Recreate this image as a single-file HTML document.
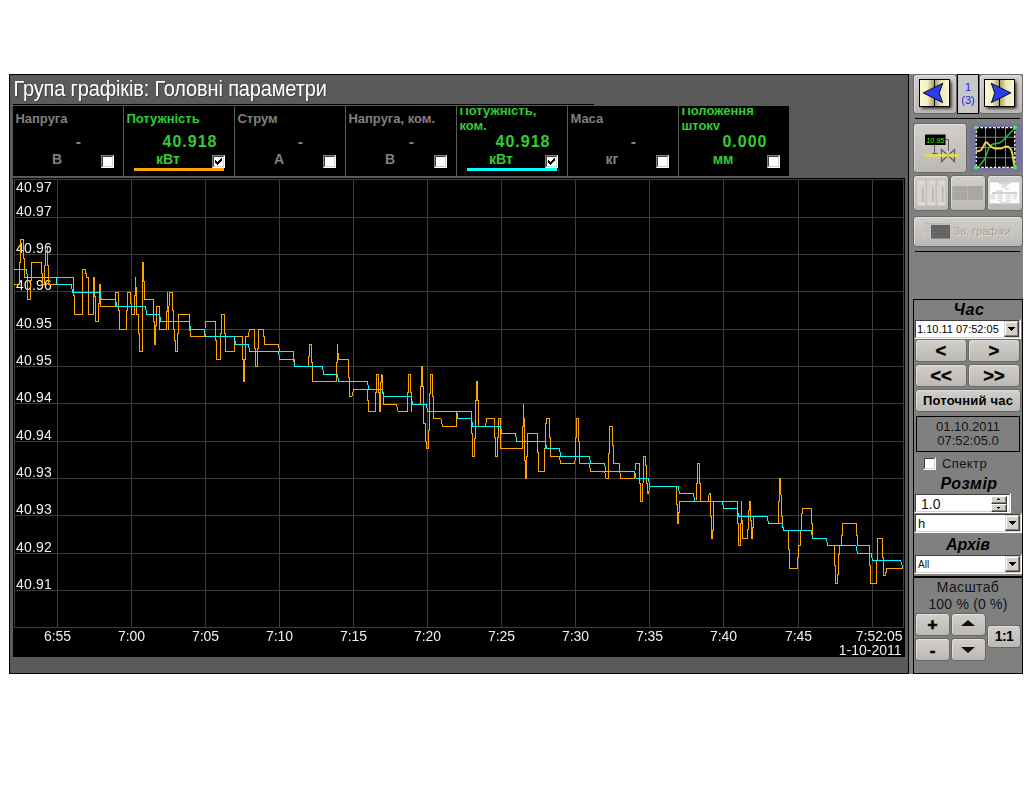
<!DOCTYPE html>
<html lang="uk">
<head>
<meta charset="utf-8">
<title>Група графіків: Головні параметри</title>
<style>
html,body{margin:0;padding:0;background:#fff;}
body{width:1034px;height:793px;position:relative;overflow:hidden;font-family:"Liberation Sans",sans-serif;}
.abs{position:absolute;}
#main{position:absolute;left:9px;top:74px;width:898px;height:598px;background:#5a5a5a;border:1px solid #000;}
#title{position:absolute;left:13.4px;top:77px;font-size:20px;letter-spacing:-0.15px;line-height:24px;color:#fff;text-shadow:1px 1px 0 rgba(0,0,0,0.3);white-space:nowrap;transform:scaleY(1.07);transform-origin:0 19px;}
#hline{position:absolute;left:13px;top:104px;width:581px;height:1px;background:#000;}
.cell{position:absolute;top:106px;width:110px;height:70px;background:#000;overflow:hidden;}
.cell .lbc{position:absolute;left:0;top:2px;width:110px;height:22px;overflow:hidden;}
.cell .lb{position:absolute;left:2.4px;font-size:13px;font-weight:bold;line-height:15px;white-space:nowrap;}
.cell .val{position:absolute;font-size:16px;letter-spacing:1px;font-weight:bold;line-height:18px;white-space:nowrap;}
.cell .un{position:absolute;font-size:14px;font-weight:bold;line-height:15px;white-space:nowrap;}
.gry{color:#808080;}
.grn{color:#32cd32;}
.cb{position:absolute;box-sizing:border-box;width:13px;height:13px;background:#fff;border:1px solid;border-color:#808080 #fff #fff #808080;}
.cb:before{content:"";position:absolute;left:0;top:0;width:9px;height:9px;border:1px solid;border-color:#404040 #d4d0c8 #d4d0c8 #404040;}
.cb svg{left:-1px !important;top:-1px !important;}
#chart{position:absolute;left:13px;top:178px;width:892px;height:479px;background:#000;}
#right{position:absolute;left:909px;top:74px;width:114px;height:600px;background:#808080;}
.btn{position:absolute;box-sizing:border-box;border:1px solid #666;border-radius:3.5px;background:linear-gradient(#d2cfcb,#bcb9b5);box-shadow:inset 1px 1px 0 rgba(255,255,255,0.4);color:#000;text-align:center;font-weight:bold;}
.sep{position:absolute;left:915px;width:106px;height:1px;background:#000;}

.hd{font-size:16px;font-weight:bold;font-style:italic;text-align:center;line-height:18px;color:#000;}
.sel{position:absolute;box-sizing:border-box;background:#fff;border:1px solid;border-color:#808080 #fff #fff #808080;color:#141418;}
.sel:before{content:"";position:absolute;left:0;top:0;right:0;bottom:0;border:1px solid;border-color:#404040 #d4d0c8 #d4d0c8 #404040;}
.dd{position:absolute;box-sizing:border-box;right:1px;top:1px;bottom:1px;width:15px;background:#d4d0c8;border:1px solid;border-color:#d4d0c8 #404040 #404040 #d4d0c8;box-shadow:inset -1px -1px 0 #808080, inset 1px 1px 0 #fff;}
.dd:after{content:"";position:absolute;left:3px;top:5px;width:7px;height:4px;background:linear-gradient(#000,#000) 0 0/7px 1px no-repeat,linear-gradient(#000,#000) 1px 1px/5px 1px no-repeat,linear-gradient(#000,#000) 2px 2px/3px 1px no-repeat,linear-gradient(#000,#000) 3px 3px/1px 1px no-repeat;}
.sp{position:absolute;box-sizing:border-box;right:3px;width:16px;height:8px;background:#d4d0c8;border:1px solid;border-color:#fff #404040 #404040 #fff;box-shadow:inset -1px -1px 0 #808080;}
.sp:after{content:"";position:absolute;left:5px;top:1px;width:3px;height:2px;background:linear-gradient(#000,#000) 1px 0/1px 1px no-repeat,linear-gradient(#000,#000) 0 1px/3px 1px no-repeat;}
.sp.d:after{top:2px;background:linear-gradient(#000,#000) 0 0/3px 1px no-repeat,linear-gradient(#000,#000) 1px 1px/1px 1px no-repeat;}
.tb{font-size:18.5px;line-height:22px;-webkit-text-stroke:0.35px #000;}
.zb{font-size:17px;line-height:20px;}
.up{position:absolute;left:9px;top:6px;border:7px solid transparent;border-bottom:6px solid #111;border-top:0;}
.dn{position:absolute;left:9px;top:8px;border:7px solid transparent;border-top:6px solid #111;border-bottom:0;}
</style>
</head>
<body>
<div id="main"></div>
<div id="title">Група графіків: Головні параметри</div>
<div id="hline"></div>
<div class="cell gry" style="left:13px"><div class="lbc"><div class="lb" style="top:3px">Напруга</div></div><div class="val" style="left:16px;width:100px;text-align:center;top:27px">-</div><div class="un" style="left:14px;width:60px;text-align:center;top:46px">В</div><div class="cb" style="left:88px;top:49px"></div></div>
<div class="cell grn" style="left:124px"><div class="lbc"><div class="lb" style="top:3px">Потужність</div></div><div class="val" style="left:16px;width:100px;text-align:center;top:27px">40.918</div><div class="un" style="left:14px;width:60px;text-align:center;top:46px">кВт</div><div class="abs" style="left:10px;top:62px;width:90px;height:3px;background:#ffa500"></div><div class="cb" style="left:88px;top:49px"><svg class="abs" style="left:0;top:0" width="13" height="13" shape-rendering="crispEdges"><path d="M3 5v3h1v1h1v1h1v-1h1v-1h1v-1h1v-1h1v-3h-1v1h-1v1h-1v1h-1v1h-1v-1h-1v-1z" fill="#000"/></svg></div></div>
<div class="cell gry" style="left:235px"><div class="lbc"><div class="lb" style="top:3px">Струм</div></div><div class="val" style="left:16px;width:100px;text-align:center;top:27px">-</div><div class="un" style="left:14px;width:60px;text-align:center;top:46px">А</div><div class="cb" style="left:88px;top:49px"></div></div>
<div class="cell gry" style="left:346px"><div class="lbc"><div class="lb" style="top:3px">Напруга, ком.</div></div><div class="val" style="left:16px;width:100px;text-align:center;top:27px">-</div><div class="un" style="left:14px;width:60px;text-align:center;top:46px">В</div><div class="cb" style="left:88px;top:49px"></div></div>
<div class="cell grn" style="left:457px"><div class="lbc"><div class="lb" style="top:-5px">Потужність,<br>ком.</div></div><div class="val" style="left:16px;width:100px;text-align:center;top:27px">40.918</div><div class="un" style="left:14px;width:60px;text-align:center;top:46px">кВт</div><div class="abs" style="left:10px;top:62px;width:90px;height:3px;background:#00ffff"></div><div class="cb" style="left:88px;top:49px"><svg class="abs" style="left:0;top:0" width="13" height="13" shape-rendering="crispEdges"><path d="M3 5v3h1v1h1v1h1v-1h1v-1h1v-1h1v-1h1v-3h-1v1h-1v1h-1v1h-1v1h-1v-1h-1v-1z" fill="#000"/></svg></div></div>
<div class="cell gry" style="left:568px"><div class="lbc"><div class="lb" style="top:3px">Маса</div></div><div class="val" style="left:16px;width:100px;text-align:center;top:27px">-</div><div class="un" style="left:14px;width:60px;text-align:center;top:46px">кг</div><div class="cb" style="left:88px;top:49px"></div></div>
<div class="cell grn" style="left:679px"><div class="lbc"><div class="lb" style="top:-5px">Положення<br>штоку</div></div><div class="val" style="left:16px;width:100px;text-align:center;top:27px">0.000</div><div class="un" style="left:14px;width:60px;text-align:center;top:46px">мм</div><div class="cb" style="left:88px;top:49px"></div></div>
<div id="chart">
<svg class="abs" style="left:0;top:0" width="892" height="479" viewBox="13 178 892 479" font-family="Liberation Sans, sans-serif" font-size="14" fill="#f0f0f0">
<path d="M14 217.5H904M14 254.5H904M14 291.5H904M14 329.5H904M14 366.5H904M14 403.5H904M14 441.5H904M14 478.5H904M14 515.5H904M14 553.5H904M14 590.5H904M57.5 179V628M131.5 179V628M205.5 179V628M279.5 179V628M353.5 179V628M427.5 179V628M501.5 179V628M575.5 179V628M649.5 179V628M723.5 179V628M798.5 179V628M872.5 179V628" stroke="#3d3d3d" stroke-width="1" fill="none" shape-rendering="crispEdges"/>
<rect x="14.5" y="179.5" width="889" height="448" stroke="#3d3d3d" stroke-width="1" fill="none" shape-rendering="crispEdges"/>
<g style="opacity:0.999">
<text x="16" y="192" letter-spacing="0.2">40.97</text>
<text x="16" y="216" letter-spacing="0.2">40.97</text>
<text x="16" y="253" letter-spacing="0.2">40.96</text>
<text x="16" y="290" letter-spacing="0.2">40.96</text>
<text x="16" y="328" letter-spacing="0.2">40.95</text>
<text x="16" y="365" letter-spacing="0.2">40.95</text>
<text x="16" y="402" letter-spacing="0.2">40.94</text>
<text x="16" y="440" letter-spacing="0.2">40.94</text>
<text x="16" y="477" letter-spacing="0.2">40.93</text>
<text x="16" y="514" letter-spacing="0.2">40.93</text>
<text x="16" y="552" letter-spacing="0.2">40.92</text>
<text x="16" y="589" letter-spacing="0.2">40.91</text>
<text x="57.5" y="641" text-anchor="middle">6:55</text>
<text x="131.5" y="641" text-anchor="middle">7:00</text>
<text x="205.5" y="641" text-anchor="middle">7:05</text>
<text x="279.5" y="641" text-anchor="middle">7:10</text>
<text x="353.5" y="641" text-anchor="middle">7:15</text>
<text x="427.5" y="641" text-anchor="middle">7:20</text>
<text x="501.5" y="641" text-anchor="middle">7:25</text>
<text x="575.5" y="641" text-anchor="middle">7:30</text>
<text x="649.5" y="641" text-anchor="middle">7:35</text>
<text x="723.5" y="641" text-anchor="middle">7:40</text>
<text x="798.5" y="641" text-anchor="middle">7:45</text>
<text x="902.5" y="641" text-anchor="end">7:52:05</text>
<text x="901.5" y="655" text-anchor="end">1-10-2011</text>
</g>
<polyline points="14.4,284.5 19.5,284.5 19.5,262.5 20.5,262.5 20.5,239.5 23.6,239.5 23.6,258.5 24.6,258.5 24.6,277.5 27.3,277.5 27.3,299.5 30.7,299.5 30.7,280.5 31.6,280.5 31.6,262.5 41.7,262.5 41.7,273.5 42.8,273.5 42.8,284.5 44.5,284.5 44.5,265.5 45.4,265.5 45.4,247.5 47.7,247.5 47.7,265.5 48.6,265.5 48.6,284.5 56.6,284.5 56.6,277.5 73.1,277.5 73.2,277.5 73.2,295.5 74.5,295.5 74.5,314.5 82.1,314.5 82.1,269.5 85.9,269.5 85.9,273.5 86.7,273.5 86.7,277.5 88.8,277.5 89.0,314.5 92.5,314.5 93.0,314.5 93.0,277.5 94.7,277.5 94.7,296.5 95.7,296.5 95.7,321.5 98.5,321.5 98.5,303.5 99.3,303.5 99.3,284.5 100.5,284.5 100.9,306.5 115.7,306.5 115.7,292.5 118.4,292.5 118.4,310.5 119.3,310.5 119.3,329.5 126.5,329.5 126.5,310.5 127.5,310.5 127.5,292.5 130.2,292.5 130.2,303.5 131.5,303.5 131.5,314.5 134.1,314.5 134.4,295.5 135.4,295.5 135.4,277.5 135.8,277.5 136.2,295.5 136.9,295.5 136.9,314.5 138.4,314.5 138.4,333.5 139.4,333.5 139.4,351.5 142.0,351.5 142.0,262.5 143.5,262.5 143.5,281.5 144.5,281.5 144.5,299.5 153.6,299.5 153.6,321.5 154.6,321.5 154.6,344.5 155.8,344.5 155.8,325.5 156.3,325.5 156.3,306.5 159.6,306.5 159.9,329.5 166.6,329.5 166.6,311.5 167.6,311.5 167.6,292.5 167.8,292.5 168.3,329.5 168.7,329.5 169.2,292.5 172.5,292.5 172.5,310.5 173.5,310.5 173.5,329.5 174.8,329.5 174.8,340.5 175.8,340.5 175.8,351.5 177.5,351.5 177.5,333.5 178.5,333.5 178.5,314.5 190.0,314.5 189.8,314.5 190.1,336.5 204.8,336.5 205.2,321.5 215.7,321.5 215.7,340.5 216.6,340.5 216.6,359.5 220.0,359.5 220.0,333.5 221.6,333.5 221.6,314.5 224.4,314.5 224.4,333.5 225.4,333.5 225.4,351.5 234.5,351.5 234.9,336.5 242.4,336.5 242.7,359.5 243.3,359.5 243.3,381.5 244.7,381.5 244.7,359.5 245.6,359.5 245.6,336.5 248.1,336.5 249.7,329.5 254.7,329.5 254.7,348.5 255.4,348.5 255.4,366.5 257.6,366.5 257.6,348.5 258.4,348.5 258.4,329.5 263.2,329.5 263.2,336.5 264.2,336.5 264.2,344.5 278.4,344.5 279.6,351.5 293.5,351.5 293.5,359.5 294.5,359.5 294.5,366.5 308.6,366.5 308.2,366.5 308.2,356.5 309.2,356.5 309.2,344.5 311.6,344.5 311.6,362.5 312.6,362.5 312.6,381.5 336.3,381.5 336.3,362.5 337.3,362.5 337.3,344.5 337.8,344.5 338.2,359.5 348.5,359.5 348.5,377.5 349.6,377.5 349.6,396.5 352.0,396.5 353.6,389.5 367.5,389.5 367.5,400.5 368.5,400.5 368.5,411.5 375.4,411.5 375.4,392.5 376.4,392.5 376.4,374.5 378.6,374.5 378.6,392.5 379.4,392.5 379.4,411.5 380.7,411.5 381.1,374.5 382.0,374.5 382.6,392.5 383.2,392.5 383.2,404.5 396.5,404.5 398.1,411.5 407.6,411.5 407.6,392.5 408.4,392.5 408.4,374.5 410.7,374.5 410.7,392.5 411.6,392.5 411.6,411.5 411.5,411.5 411.9,404.5 420.3,404.5 420.3,386.5 421.3,386.5 421.3,366.5 422.6,366.5 422.6,386.5 423.2,386.5 423.2,423.5 425.1,423.5 425.1,441.5 426.4,441.5 426.4,448.5 428.3,448.5 428.7,430.5 429.5,430.5 429.5,393.5 430.4,393.5 430.4,374.5 432.4,374.5 432.4,396.5 433.3,396.5 433.3,418.5 440.9,418.5 442.5,426.5 456.7,426.5 456.7,411.5 471.4,411.5 471.4,433.5 472.7,433.5 472.7,456.5 474.6,456.5 474.6,438.5 475.6,438.5 475.6,400.5 476.3,400.5 476.3,381.5 477.5,381.5 477.5,400.5 478.1,400.5 478.1,426.5 485.3,426.5 486.9,418.5 494.2,418.5 494.2,437.5 495.5,437.5 495.5,456.5 497.6,456.5 497.6,437.5 498.5,437.5 498.5,418.5 500.5,418.5 501.0,448.5 522.2,448.5 522.2,426.5 523.5,426.5 523.5,404.5 523.5,404.5 524.2,423.5 524.2,460.5 525.4,460.5 525.4,478.5 526.4,478.5 526.6,456.5 527.7,456.5 527.7,433.5 537.5,433.5 537.5,452.5 538.8,452.5 538.8,471.5 544.3,471.5 544.3,448.5 545.1,448.5 545.1,423.5 546.6,423.5 546.6,418.5 549.7,418.5 549.7,437.5 550.6,437.5 550.6,456.5 559.2,456.5 560.7,463.5 574.3,463.5 575.2,460.5 575.6,437.5 576.5,437.5 576.5,418.5 578.3,418.5 578.3,441.5 579.1,441.5 579.1,463.5 589.2,463.5 590.7,471.5 604.6,471.5 606.1,478.5 608.4,478.5 608.4,453.5 609.6,453.5 609.6,426.5 612.4,426.5 612.4,445.5 613.4,445.5 613.4,463.5 619.5,463.5 620.3,478.5 634.8,478.5 635.2,463.5 639.3,463.5 639.5,463.5 639.5,483.5 640.4,483.5 640.4,501.5 642.7,501.5 643.1,478.5 643.3,456.5 645.9,456.5 645.9,465.5 646.5,465.5 646.5,483.5 647.5,483.5 647.5,493.5 648.5,493.5 649.9,486.5 676.1,486.5 676.1,504.5 677.4,504.5 677.4,523.5 678.6,523.5 678.9,512.5 679.5,512.5 679.5,501.5 696.0,501.5 696.3,483.5 697.2,483.5 697.2,463.5 699.7,463.5 699.7,483.5 700.7,483.5 700.7,501.5 708.0,501.5 709.2,493.5 710.5,493.5 710.8,516.5 711.8,516.5 711.8,538.5 712.8,538.5 713.3,519.5 713.3,501.5 737.7,501.5 737.6,501.5 737.6,523.5 738.5,523.5 738.5,545.5 740.4,545.5 740.4,523.5 741.4,523.5 741.4,501.5 741.8,501.5 741.8,520.5 742.7,520.5 742.7,538.5 747.4,538.5 747.4,529.5 748.3,529.5 748.3,510.5 749.2,510.5 749.2,501.5 750.6,501.5 750.9,520.5 751.7,520.5 751.7,538.5 752.7,538.5 752.7,527.5 753.8,527.5 753.8,516.5 767.2,516.5 768.5,523.5 778.2,523.5 778.2,501.5 779.5,501.5 779.5,478.5 780.6,478.5 781.1,498.5 781.1,516.5 782.4,516.5 782.4,523.5 783.6,530.5 788.1,530.5 788.1,549.5 789.3,549.5 789.3,568.5 797.5,568.5 797.5,557.5 798.5,557.5 798.5,545.5 800.0,545.5 800.0,530.5 801.3,530.5 801.3,513.5 802.2,513.5 802.2,508.5 811.8,508.5 811.8,523.5 812.6,523.5 812.6,538.5 826.3,538.5 827.8,545.5 834.2,545.5 834.2,545.5 834.2,565.5 835.5,565.5 835.5,583.5 837.4,583.5 837.4,574.5 838.6,574.5 838.6,554.5 839.5,554.5 839.5,545.5 841.4,545.5 841.4,535.5 842.4,535.5 842.4,523.5 856.5,523.5 856.5,535.5 857.6,535.5 857.6,545.5 869.5,545.5 869.5,565.5 870.8,565.5 870.8,583.5 876.5,583.5 876.8,560.5 877.4,560.5 877.4,538.5 882.4,538.5 882.4,557.5 883.4,557.5 883.4,575.5 885.3,575.5 885.3,572.5 886.6,572.5 886.6,568.5 903.3,568.5" fill="none" stroke="#ffa500" stroke-width="1" shape-rendering="crispEdges"/>
<polyline points="14.4,269.5 26.5,269.5 27.5,277.5 56.4,277.5 57.1,284.5 71.2,284.5 72.6,292.5 100.3,292.5 101.3,299.5 101.6,299.5 115.5,299.5 116.7,306.5 145.5,306.5 146.8,314.5 159.6,314.5 160.9,321.5 188.6,321.5 189.1,321.5 190.7,329.5 204.2,329.5 205.6,336.5 234.2,336.5 235.5,344.5 248.3,344.5 249.7,351.5 278.4,351.5 279.9,359.5 293.5,359.5 294.8,366.5 322.4,366.5 323.7,374.5 337.2,374.5 338.7,381.5 367.5,381.5 368.7,389.5 382.2,389.5 383.5,396.5 411.2,396.5 412.5,404.5 426.1,404.5 428.0,411.5 456.7,411.5 457.9,418.5 471.4,418.5 472.7,426.5 500.5,426.5 501.8,433.5 515.3,433.5 516.8,441.5 545.3,441.5 546.6,448.5 559.4,448.5 560.7,456.5 589.4,456.5 590.7,463.5 604.6,463.5 605.8,471.5 634.6,471.5 636.1,478.5 648.4,478.5 649.9,486.5 678.3,486.5 679.5,493.5 693.4,493.5 695.0,501.5 722.4,501.5 723.7,508.5 737.3,508.5 738.5,516.5 767.2,516.5 768.5,523.5 782.0,523.5 783.6,530.5 811.4,530.5 812.6,538.5 826.3,538.5 827.8,545.5 855.9,545.5 857.6,553.5 871.0,553.5 872.7,560.5 900.4,560.5 903.3,568.5" fill="none" stroke="#00ffff" stroke-width="1" shape-rendering="crispEdges"/>
</svg>
</div>
<div id="right"></div>
<!-- nav buttons -->
<div class="btn" style="left:913px;top:74px;width:44px;height:40px;"></div>
<div class="abs" style="left:957px;top:74px;width:20px;height:38px;border:1px solid #000;background:#c8c8c8;color:#1a1ae6;font-size:11px;line-height:13px;text-align:center;"><div style="margin-top:6px">1<br>(3)</div></div>
<div class="btn" style="left:979px;top:74px;width:44px;height:40px;"></div>
<svg class="abs" style="left:913px;top:74px" width="110" height="40" viewBox="913 74 110 40">
<defs>
<linearGradient id="bk" x1="0" x2="1" y1="0" y2="0"><stop offset="0" stop-color="#fcf8d0"/><stop offset="0.5" stop-color="#f6f2c6"/><stop offset="1" stop-color="#a39d66"/></linearGradient>
<linearGradient id="bk2" x1="0" x2="1" y1="0" y2="0"><stop offset="0" stop-color="#a39d66"/><stop offset="0.45" stop-color="#ece8bc"/><stop offset="1" stop-color="#fcf8d0"/></linearGradient>
<filter id="sh" x="-30%" y="-30%" width="170%" height="170%"><feGaussianBlur stdDeviation="1.7"/></filter>
</defs>
<rect x="921.5" y="81.5" width="30" height="27" fill="#000" opacity="0.8" filter="url(#sh)"/>
<rect x="919.5" y="79.5" width="15" height="27" fill="url(#bk)" stroke="#000" stroke-width="1"/>
<rect x="934.5" y="79.5" width="15" height="27" fill="url(#bk2)" stroke="#000" stroke-width="1"/>
<path d="M923.2 92.9 L942.8 83.2 L939.2 92.9 L942.6 102.6 Z" fill="#2a3cf2" stroke="#000" stroke-width="0.9" stroke-linejoin="miter"/>
<rect x="986.5" y="81.5" width="30" height="27" fill="#000" opacity="0.8" filter="url(#sh)"/>
<rect x="984.5" y="79.5" width="15" height="27" fill="url(#bk)" stroke="#000" stroke-width="1"/>
<rect x="999.5" y="79.5" width="15" height="27" fill="url(#bk2)" stroke="#000" stroke-width="1"/>
<path d="M1010.8 92.9 L991.2 83.2 L994.8 92.9 L991.4 102.6 Z" fill="#2a3cf2" stroke="#000" stroke-width="0.9" stroke-linejoin="miter"/>
</svg>
<div class="abs" style="left:915px;top:118px;width:105px;height:1px;background:#000"></div>
<!-- row 2 -->
<div class="btn" style="left:913px;top:123px;width:54px;height:50px;"></div>
<div class="btn" style="left:969px;top:123px;width:54px;height:50px;background:#75759b;border-color:#7c7c94;box-shadow:none;"></div>
<svg class="abs" style="left:914px;top:124px" width="109" height="48" viewBox="914 124 109 48" font-family="Liberation Sans, sans-serif"><g fill="none" stroke="#5a5a5a" stroke-width="1"><path d="M945.5 139.5H948.5V151"/><path d="M934.5 145V153.5M932 153.5H937.5"/><path d="M941.5 149.5V161.5L948 155.4Z M954.5 149.5V161.5L948 155.4Z" stroke-width="1.2" stroke-linejoin="miter"/></g><rect x="923.5" y="154" width="35.5" height="2.8" fill="#e6e04a" opacity="0.85"/><rect x="925" y="134.5" width="20.5" height="10.5" fill="#000"/><text x="935.3" y="142.6" font-size="7.2" fill="#55ee11" text-anchor="middle" font-style="italic">10.95</text><rect x="975.5" y="127" width="40" height="41" fill="#000"/><path d="M985.5 127V168M995.5 127V168M1005.5 127V168M975.5 137.25H1015.5M975.5 147.5H1015.5M975.5 157.75H1015.5" stroke="#8c8c8c" stroke-width="0.9" fill="none"/><rect x="976.2" y="127.7" width="38.6" height="39.6" fill="none" stroke="#fff" stroke-width="1.3" stroke-dasharray="2.6 1.6"/><path d="M978.6 166.8C981 164 983 162 984.8 158.7S987 152 988.6 148.7S990.5 145 992.3 144.3S997 143.5 999.8 142.7S1003 140.5 1004.8 138.7S1009 134 1011 131.9L1015.4 128.1" stroke="#22c436" stroke-width="1.5" fill="none"/><path d="M976.7 151.2C978.5 151 980 150.8 981.1 149.9S983.5 146 984.8 143.7S986 142.3 986.7 142.5S988.5 144.5 989.8 145.6S992.5 148.2 994.8 148.4S999 148.6 1001 148.4S1003.5 147 1004.8 146.8S1007.5 146.2 1008.5 146.8S1011 149 1011.7 151.2S1013 158 1013.5 161.2S1014.6 166 1015.4 167.4" stroke="#e6d23c" stroke-width="2" fill="none" stroke-linecap="round"/><circle cx="976" cy="127.5" r="2.1" fill="#58e058"/><circle cx="1015" cy="127.5" r="2.1" fill="#58e058"/><circle cx="976" cy="167.5" r="2.1" fill="#58e058"/><circle cx="1015" cy="167.5" r="2.1" fill="#58e058"/></svg>
<!-- row 3 -->
<div class="btn" style="left:913px;top:175px;width:36px;height:36px;"></div>
<div class="btn" style="left:950px;top:175px;width:36px;height:36px;"></div>
<div class="btn" style="left:987px;top:175px;width:36px;height:36px;"></div>
<svg class="abs" style="left:914px;top:176px" width="109" height="35" viewBox="914 176 109 35"><rect x="916" y="179" width="30" height="27" fill="#cfccc7"/><rect x="916.5" y="179.5" width="9.5" height="26.5" fill="#d6d3ce" stroke="#bdbab5" stroke-width="0.7"/><rect x="922" y="187" width="1.6" height="15" fill="#b9b6b1"/><rect x="919.5" y="182" width="5" height="1.2" fill="#e6e4e0"/><rect x="918.5" y="203" width="6" height="1.2" fill="#e6e4e0"/><rect x="926.5" y="179.5" width="9.5" height="26.5" fill="#d6d3ce" stroke="#bdbab5" stroke-width="0.7"/><rect x="932" y="187" width="1.6" height="15" fill="#b9b6b1"/><rect x="929.5" y="182" width="5" height="1.2" fill="#e6e4e0"/><rect x="928.5" y="203" width="6" height="1.2" fill="#e6e4e0"/><rect x="936.5" y="179.5" width="9.5" height="26.5" fill="#d6d3ce" stroke="#bdbab5" stroke-width="0.7"/><rect x="942" y="187" width="1.6" height="15" fill="#b9b6b1"/><rect x="939.5" y="182" width="5" height="1.2" fill="#e6e4e0"/><rect x="938.5" y="203" width="6" height="1.2" fill="#e6e4e0"/><rect x="952.3" y="186" width="30.7" height="14" fill="#a9a7a3"/><path d="M967.5 186V200" stroke="#bcbab6" stroke-width="0.8"/><path d="M954 191.5H966" stroke="#b6b4b0" stroke-width="1.5" stroke-dasharray="1 0.8"/><path d="M958 198H962M973 198H977" stroke="#b4b2ae" stroke-width="0.8"/><rect x="989.3" y="182" width="30.5" height="21.8" fill="#fcfcfc" stroke="#c4c2be" stroke-width="0.6"/><g stroke="#9a9a9a" stroke-width="0.6" fill="none"><path d="M999 183.2H1010M1001 185H1008M1002 187H1006M1005 189H1009M996 191H1003"/><path d="M992 193H1017" stroke="#777"/><path d="M991 195H996M998 195H1003M1006 195H1011M1013 195H1017M991 196.8H995M998 196.8H1002M1006 196.8H1012M1014 196.8H1017M991 198.6H996M998 198.6H1003M1006 198.6H1010M1013 198.6H1016M998 200.4H1002M1006 200.4H1011M1000 202.3H1010" stroke-dasharray="1.5 0.7"/></g></svg>
<div class="btn" style="left:913px;top:216px;width:110px;height:31px;"></div>
<div class="abs" style="left:953.5px;top:224px;font-size:11px;line-height:14px;color:#a3a19d;text-shadow:1px 1px 0 #e4e2de;white-space:nowrap;">Зв. графіки</div>
<svg class="abs" style="left:914px;top:217px" width="109" height="30" viewBox="914 217 109 30"><rect x="923.7" y="223" width="26.5" height="16" fill="#c9c6c1"/><rect x="923.7" y="223" width="26.5" height="1.6" fill="#bdbab6"/><rect x="931" y="225" width="19" height="13.6" fill="#636363"/><path d="M931 229.5H950M931 232.5H950M931 235.5H950" stroke="#707070" stroke-width="0.6"/><path d="M925 228H929M925 231H929M925 234H929M925 237H929" stroke="#b0aeaa" stroke-width="0.6"/></svg>
<div class="abs" style="left:915px;top:251px;width:105px;height:1px;background:#000"></div>
<!-- time box -->
<div class="abs" style="left:913px;top:299px;width:108px;height:373px;border:1px solid #000;"></div>
<div class="abs" style="left:914px;top:576px;width:108px;height:2px;background:#000;"></div>
<div class="abs hd" style="left:915px;top:301px;width:108px;letter-spacing:0.7px">Час</div>
<div class="sel" style="left:914px;top:319px;width:107px;height:20px;"><span style="position:absolute;left:2px;top:3px;font-size:11px;line-height:12px;color:#000">1.10.11 07:52:05</span><div class="dd"></div></div>
<div class="btn tb" style="left:915px;top:339px;width:52px;height:23px;">&lt;</div>
<div class="btn tb" style="left:968px;top:339px;width:52px;height:23px;">&gt;</div>
<div class="btn tb" style="left:915px;top:364px;width:52px;height:23px;">&lt;&lt;</div>
<div class="btn tb" style="left:968px;top:364px;width:52px;height:23px;">&gt;&gt;</div>
<div class="btn" style="left:915px;top:389px;width:106px;height:23px;font-size:13px;line-height:21px;letter-spacing:0.2px">Поточний час</div>
<div class="abs" style="left:916px;top:416px;width:102px;height:34px;border:1px solid #000;font-size:13px;line-height:14px;text-align:center;color:#141418;"><div style="margin-top:3px">01.10.2011<br>07:52:05.0</div></div>
<div class="cb" style="left:923px;top:457px;"></div>
<div class="abs" style="left:942px;top:456px;font-size:13px;line-height:15px;color:#141418;letter-spacing:0.4px">Спектр</div>
<div class="abs hd" style="left:915px;top:475px;width:108px;letter-spacing:0.5px">Розмір</div>
<div class="sel" style="left:914px;top:493px;width:97px;height:20px;"><span style="position:absolute;left:6px;top:2px;font-size:14px;line-height:16px;">1.0</span>
<div class="sp" style="top:2px"></div><div class="sp d" style="top:10px"></div></div>
<div class="sel" style="left:914px;top:513px;width:108px;height:20px;"><span style="position:absolute;left:3px;top:2px;font-size:13px;line-height:15px;">h</span><div class="dd"></div></div>
<div class="abs hd" style="left:914px;top:536px;width:108px;">Архів</div>
<div class="sel" style="left:914px;top:554px;width:108px;height:20px;"><span style="position:absolute;left:3px;top:4px;font-size:10px;line-height:12px;">All</span><div class="dd"></div></div>
<div class="abs" style="left:914px;top:579px;width:108px;text-align:center;font-size:14px;line-height:17px;color:#141418;"><span style="letter-spacing:0.35px">Масштаб</span><br><span style="letter-spacing:0.2px">100 % (0 %)</span></div>
<div class="btn zb" style="left:915px;top:613px;width:35px;height:23px;-webkit-text-stroke:0.7px #000;line-height:21px">+</div>
<div class="btn zb" style="left:951px;top:613px;width:35px;height:23px;"><i class="up"></i></div>
<div class="btn zb" style="left:915px;top:638px;width:35px;height:23px;-webkit-text-stroke:0.6px #000;line-height:23px">-</div>
<div class="btn zb" style="left:951px;top:638px;width:35px;height:23px;"><i class="dn"></i></div>
<div class="btn" style="left:987px;top:625px;width:34px;height:23px;font-size:14px;line-height:21px;letter-spacing:-0.6px">1:1</div>

</body>
</html>
